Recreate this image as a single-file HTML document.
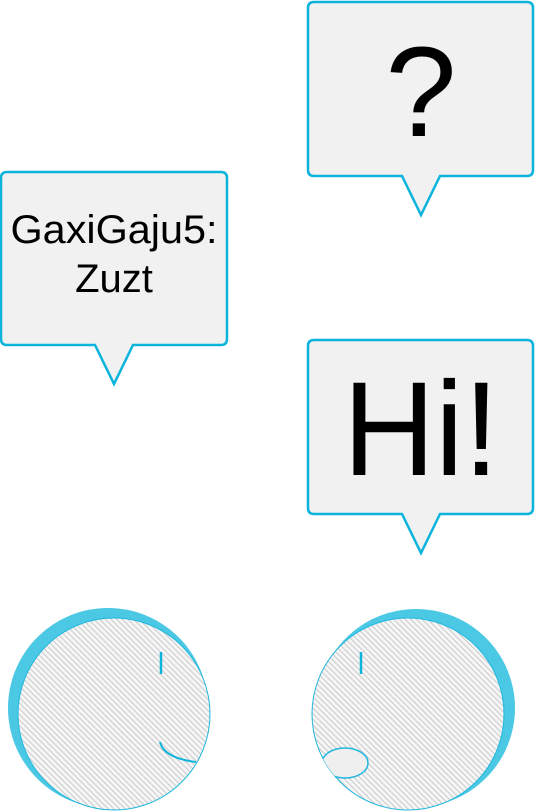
<!DOCTYPE html>
<html><head><style>html,body{margin:0;padding:0;background:#fff;width:535px;height:812px;overflow:hidden}</style></head>
<body>
<svg width="535" height="812" viewBox="0 0 535 812" xmlns="http://www.w3.org/2000/svg" font-family="'Liberation Sans', Arial, sans-serif">
<defs>
<pattern id="h" width="4" height="4" patternUnits="userSpaceOnUse" patternTransform="rotate(-45)">
<rect width="4" height="4" fill="#f6f6f6"/>
<rect x="0" y="0" width="1.1" height="4" fill="#cccccc"/>
</pattern>
<clipPath id="cl"><circle cx="114" cy="714" r="96"/></clipPath>
<clipPath id="cr"><circle cx="408" cy="714" r="96"/></clipPath>
</defs>
<g fill="#f1f1f1" stroke="#0ab4dc" stroke-width="2.5" stroke-linejoin="miter">
<path d="M314,2 H527 Q533,2 533,8 V170 Q533,176 527,176 H440 L421,215 L402,176 H314 Q308,176 308,170 V8 Q308,2 314,2 Z"/>
<path d="M7,172 H221 Q227,172 227,178 V339 Q227,345 221,345 H133 L114,384 L95,345 H7 Q1,345 1,339 V178 Q1,172 7,172 Z"/>
<path d="M314,340 H527 Q533,340 533,346 V508 Q533,514 527,514 H440 L421,553 L402,514 H314 Q308,514 308,508 V346 Q308,340 314,340 Z"/>
</g>
<text x="421" y="136" font-size="128" text-anchor="middle" fill="#000">?</text>
<text x="421" y="475" font-size="134" text-anchor="middle" fill="#000" textLength="156" lengthAdjust="spacingAndGlyphs">Hi!</text>
<text x="114" y="243" font-size="40" text-anchor="middle" fill="#000" textLength="207" lengthAdjust="spacingAndGlyphs">GaxiGaju5:</text>
<text x="114" y="292" font-size="40" text-anchor="middle" fill="#000">Zuzt</text>

<circle cx="108" cy="708" r="100" fill="#4ac8e4"/>
<circle cx="114" cy="714" r="96" fill="url(#h)" stroke="#22b8de" stroke-width="1"/>
<path d="M161,652 V674" stroke="#0ab4dc" stroke-width="2.5"/>
<path d="M160,742 Q164,758 196,762" stroke="#0ab4dc" stroke-width="2" fill="none" clip-path="url(#cl)"/>

<circle cx="416" cy="708" r="99" fill="#4ac8e4"/>
<circle cx="408" cy="714" r="96" fill="url(#h)" stroke="#22b8de" stroke-width="1"/>
<path d="M361,652 V674" stroke="#0ab4dc" stroke-width="2.5"/>
<ellipse cx="345" cy="763" rx="23" ry="15" fill="#efefef" stroke="#22b8de" stroke-width="1.5" clip-path="url(#cr)"/>
</svg>
</body></html>
